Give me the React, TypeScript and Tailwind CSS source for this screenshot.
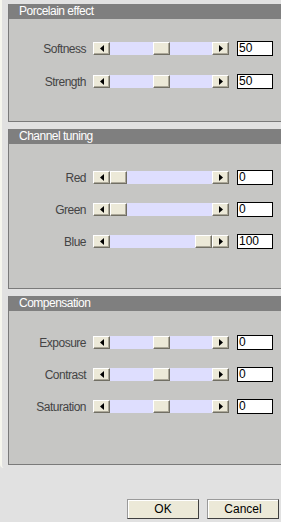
import React from "react";

type Row = { label: string; value: number; pos: number };

const panels: { title: string; rows: Row[]; h: string; pt: string }[] = [
  {
    title: "Porcelain effect",
    rows: [
      { label: "Softness", value: 50, pos: 50 },
      { label: "Strength", value: 50, pos: 50 },
    ],
    h: "h-[118px]",
    pt: "pt-[22px] gap-[18px]",
  },
  {
    title: "Channel tuning",
    rows: [
      { label: "Red", value: 0, pos: 0 },
      { label: "Green", value: 0, pos: 0 },
      { label: "Blue", value: 100, pos: 100 },
    ],
    h: "h-[160px]",
    pt: "pt-[26px] gap-[17px]",
  },
  {
    // range is -100..100, so 0 sits in the middle
    title: "Compensation",
    rows: [
      { label: "Exposure", value: 0, pos: 50 },
      { label: "Contrast", value: 0, pos: 50 },
      { label: "Saturation", value: 0, pos: 50 },
    ],
    h: "h-[169px]",
    pt: "pt-[24px] gap-[17px]",
  },
];

const bevel =
  "bg-[#ece9d8] border border-t-white border-l-white border-r-[#716f64] border-b-[#716f64] shadow-[inset_-1px_-1px_0_#aca899]";

const ArrowBtn = ({ dir }: { dir: "left" | "right" }) => (
  <div className={`w-[17px] h-[13px] flex items-center justify-center ${bevel}`}>
    <svg width="4" height="7" viewBox="0 0 4 7">
      {dir === "left" ? (
        <path d="M4 0 L0 3.5 L4 7 Z" fill="#000" />
      ) : (
        <path d="M0 0 L4 3.5 L0 7 Z" fill="#000" />
      )}
    </svg>
  </div>
);

const Slider = ({ pos }: { pos: number }) => (
  <div className="flex items-center w-[136px] h-[13px]">
    <ArrowBtn dir="left" />
    <div className="relative flex-1 h-[13px] bg-[#dedefe]">
      <div
        className={`absolute top-0 w-[17px] h-[13px] ${bevel}`}
        style={{ left: `${(pos / 100) * 85}px` }}
      />
    </div>
    <ArrowBtn dir="right" />
  </div>
);

const SliderRow = ({ label, value, pos }: Row) => (
  <div className="flex items-center h-[15px]">
    <div className="w-[78px] pr-[1px] text-right text-[12px] tracking-[-0.5px] leading-none text-[#444]">
      {label}
    </div>
    <div className="ml-[6px]">
      <Slider pos={pos} />
    </div>
    <div className="ml-[8px] w-[36px] h-[15px] bg-white border border-black px-[1px] text-[12px] leading-[13px] text-black">
      {value}
    </div>
  </div>
);

export default function App() {
  return (
    <div
      className="w-[281px] h-[522px] overflow-hidden bg-[#e1e1e1] flex flex-col"
      style={{ fontFamily: '"Liberation Sans", Arial, sans-serif' }}
    >
      <div className="w-[300px] h-[468px] border-l-2 border-[#f6f6ee] rounded-bl-[4px] pl-[6px] pt-[4px] flex flex-col gap-[7px]">
        {panels.map((p) => (
          <div
            key={p.title}
            className={`flex flex-col ${p.h} border-l border-b border-[#7a7a7a] bg-[#c6c6c4]`}
          >
            <div className="h-[15px] bg-[#7f7f7f] text-white text-[12px] tracking-[-0.5px] leading-[15px] pl-[10px]">
              {p.title}
            </div>
            <div className={`flex flex-col ${p.pt}`}>
              {p.rows.map((r) => (
                <SliderRow key={r.label} {...r} />
              ))}
            </div>
          </div>
        ))}
      </div>
      <div className="flex justify-end gap-[8px] pr-[2px] mt-[31px]">
        {["OK", "Cancel"].map((t) => (
          <button
            key={t}
            className="w-[72px] h-[20px] bg-[#ece9d8] border border-t-[#9a9a9a] border-l-[#9a9a9a] border-r-[#404040] border-b-[#404040] shadow-[inset_1px_1px_0_#fff] text-[12px] leading-none text-black"
          >
            {t}
          </button>
        ))}
      </div>
    </div>
  );
}
